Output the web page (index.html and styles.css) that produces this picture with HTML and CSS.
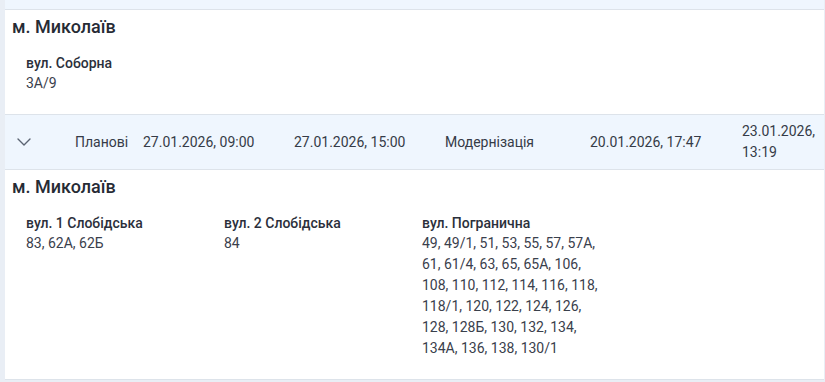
FILE: index.html
```html
<!DOCTYPE html>
<html lang="uk">
<head>
<meta charset="utf-8">
<link rel="stylesheet" href="styles.css">
</head>
<body>
<div class="page">
  <div class="table">
    <div class="row row-partial"></div>
    <div class="details">
      <div class="city">м. Миколаїв</div>
      <div class="streets">
        <div class="street">
          <div class="street-name">вул. Соборна</div>
          <div class="houses">3А/9</div>
        </div>
      </div>
    </div>
    <div class="row">
      <div class="cell cell-toggle">
        <svg class="chevron" width="14" height="8" viewBox="0 0 14 8"><path d="M1 1l6 6 6-6" fill="none" stroke="#5b6473" stroke-width="1.4" stroke-linecap="round" stroke-linejoin="round"/></svg>
      </div>
      <div class="cell">Планові</div>
      <div class="cell">27.01.2026, 09:00</div>
      <div class="cell">27.01.2026, 15:00</div>
      <div class="cell">Модернізація</div>
      <div class="cell">20.01.2026, 17:47</div>
      <div class="cell cell-last">23.01.2026, 13:19</div>
    </div>
    <div class="details">
      <div class="city">м. Миколаїв</div>
      <div class="streets">
        <div class="street">
          <div class="street-name">вул. 1 Слобідська</div>
          <div class="houses">83, 62А, 62Б</div>
        </div>
        <div class="street">
          <div class="street-name">вул. 2 Слобідська</div>
          <div class="houses">84</div>
        </div>
        <div class="street">
          <div class="street-name">вул. Погранична</div>
          <div class="houses">49, 49/1, 51, 53, 55, 57, 57А, 61, 61/4, 63, 65, 65А, 106, 108, 110, 112, 114, 116, 118, 118/1, 120, 122, 124, 126, 128, 128Б, 130, 132, 134, 134А, 136, 138, 130/1</div>
        </div>
      </div>
    </div>
  </div>
</div>
</body>
</html>
```
FILE: styles.css
```css
html, body {
  margin: 0;
  padding: 0;
}
body {
  background: #e9eef5;
  font-family: Roboto, "Noto Sans", sans-serif;
  color: #353b47;
  font-size: 14px;
}
.page {
  padding-left: 5px;
  padding-right: 1px;
  height: 382px;
  overflow: hidden;
}
.table {
  background: #fff;
}
.row {
  display: grid;
  grid-template-columns: 62px 68px 151px 151px 145px 152px 90px;
  align-items: center;
  background: #eff6fe;
  border-bottom: 1px solid #dde3ea;
  min-height: 54px;
  line-height: 21px;
}
.row-partial {
  min-height: 0;
  height: 9px;
  display: block;
}
.cell {
  padding: 0 8px;
}
.cell-toggle {
  padding-left: 12px;
  display: flex;
  align-items: center;
}
.chevron {
  display: block;
}
.cell-last {
  padding-right: 0;
}
.details {
  padding: 5px 7px 20px;
  border-bottom: 1px solid #dde3ea;
}
.city {
  font-size: 18px;
  font-weight: 500;
  line-height: 24px;
  color: #262b35;
}
.streets {
  display: flex;
  gap: 16px;
  padding-left: 14px;
  margin-top: 14px;
}
.street {
  width: 182px;
}
.street-name {
  font-weight: 500;
  line-height: 20px;
  color: #2b303b;
}
.houses {
  line-height: 21px;
  color: #3a404c;
}
```
